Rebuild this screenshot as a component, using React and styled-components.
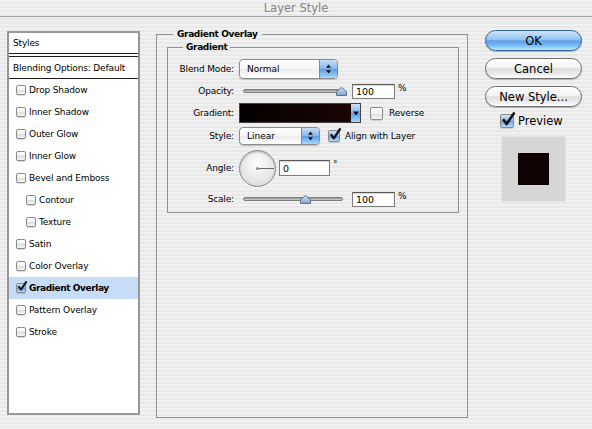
import React from 'react';
import styled, { createGlobalStyle } from 'styled-components';

const GlobalStyle = createGlobalStyle`
  html, body {
    margin: 0;
    padding: 0;
  }
  body {
    width: 592px;
    height: 429px;
    overflow: hidden;
    font-family: "DejaVu Sans", "Liberation Sans", sans-serif;
    font-size: 9px;
    color: #000;
    background: repeating-linear-gradient(to bottom, #f1f1f1 0px, #f1f1f1 2px, #e9e9e9 2px, #e9e9e9 4px);
  }
`;

const Window = styled.div`
  width: 592px;
  height: 429px;
  display: flex;
  flex-direction: column;
`;

const TitleBar = styled.div`
  height: 16px;
  border-bottom: 1px solid #a2a2a2;
  display: flex;
  align-items: center;
  justify-content: center;
  font-size: 11.5px;
  color: #858585;
`;

const Body = styled.div`
  display: flex;
  align-items: flex-start;
  padding: 11px 0 0 7px;
`;

/* left list */
const StylesList = styled.div`
  margin-top: 3px;
  width: 133px;
  height: 384px;
  box-sizing: border-box;
  border: 2px solid #979797;
  background: #fff;
  display: flex;
  flex-direction: column;
  letter-spacing: -0.15px;
`;

const ListHeader = styled.div`
  height: 20px;
  border-bottom: 4px double #1c1c1c;
  padding-left: 4px;
  display: flex;
  align-items: center;
`;

const ListBlending = styled.div`
  height: 21px;
  border-bottom: 1px solid #1c1c1c;
  padding-left: 4px;
  display: flex;
  align-items: center;
`;

const ListItem = styled.div`
  height: 22px;
  display: flex;
  align-items: center;
  gap: 3px;
  padding-left: ${p => (p.$indent ? 17 : 7)}px;
  background: ${p => (p.$active ? '#c7dcf6' : 'transparent')};
  font-weight: ${p => (p.$active ? 'bold' : 'normal')};
  letter-spacing: ${p => (p.$active ? '-0.4px' : '-0.15px')};
`;

/* checkbox */
const Box = styled.span`
  position: relative;
  flex: none;
  width: ${p => p.$size}px;
  height: ${p => p.$size}px;
  box-sizing: border-box;
  border: 1px solid #8a8a8a;
  border-radius: 2px;
  background: ${p =>
    p.$checked
      ? 'linear-gradient(#d3e5f8, #8fbbe9 50%, #6ea4e2 55%, #b5dcfb)'
      : 'linear-gradient(#ffffff, #f1f1f1 50%, #dedede 55%, #f7f7f7)'};
  box-shadow: 0 1px 1px rgba(0, 0, 0, 0.15);
`;

const Tick = styled.svg`
  position: absolute;
  left: 0;
  top: -3px;
  overflow: visible;
`;

const Checkbox = ({ size = 10, checked }) => (
  <Box $size={size} $checked={checked}>
    {checked && (
      <Tick width={size} height={size} viewBox="0 0 10 10">
        <path d="M1.5 5.2 L4 8.6 L9.6 0.4" fill="none" stroke="#111" strokeWidth="1.9" strokeLinejoin="round" />
      </Tick>
    )}
  </Box>
);

/* middle groups */
const OuterGroup = styled.fieldset`
  margin: 0 0 0 16px;
  min-inline-size: 0;
  width: 312px;
  height: 390px;
  box-sizing: border-box;
  border: 1px solid #909090;
  padding: 1px 8px 0 10px;
`;

const InnerGroup = styled.fieldset`
  margin: 0;
  min-inline-size: 0;
  border: 1px solid #909090;
  padding: 6px 0 5px 0;
`;

const Legend = styled.legend`
  font-weight: bold;
  line-height: 12px;
  letter-spacing: -0.35px;
  padding: 0 ${p => p.$pad}px;
  margin-left: ${p => p.$offset}px;
`;

const Rows = styled.div`
  display: flex;
  flex-direction: column;
  gap: 4px;
`;

const Row = styled.div`
  height: ${p => p.$h}px;
  display: grid;
  grid-template-columns: 66px 1fr;
  column-gap: 5px;
  align-items: center;
`;

const Label = styled.span`
  text-align: right;
  letter-spacing: -0.15px;
`;

const Controls = styled.div`
  display: flex;
  align-items: center;
  height: 100%;
`;

const Select = styled.div`
  width: ${p => p.$w}px;
  height: ${p => p.$h}px;
  box-sizing: border-box;
  border: 1px solid #8b8b8b;
  border-radius: 4px;
  background: linear-gradient(#ffffff, #f6f6f6 50%, #ececec 52%, #ffffff);
  box-shadow: 0 1px 1px rgba(0, 0, 0, 0.2);
  display: flex;
  align-items: center;
  padding-left: 7px;
  overflow: hidden;
`;

const SelectArrows = styled.span`
  margin-left: auto;
  width: 17px;
  align-self: stretch;
  border-left: 1px solid #6c8fbd;
  background: linear-gradient(#c7def7, #86b7ec 48%, #5e9be3 52%, #a8d8fd);
  display: flex;
  align-items: center;
  justify-content: center;
`;

const Arrows = () => (
  <svg width="7" height="10" viewBox="0 0 7 10">
    <path d="M3.5 0.5 L6 3.8 L1 3.8 Z M3.5 9.5 L6 6.2 L1 6.2 Z" fill="#111" />
  </svg>
);

const SliderWrap = styled.div`
  position: relative;
  width: 105px;
  height: 12px;
  margin-left: 4px;
  display: flex;
  align-items: center;
`;

const Track = styled.div`
  width: 100px;
  height: 4px;
  box-sizing: border-box;
  border: 1px solid #7c7c7c;
  border-radius: 2px;
  background: linear-gradient(#8d8d8d, #d9d9d9);
`;

const Thumb = styled.svg`
  position: absolute;
  top: 2px;
`;

const Slider = ({ value }) => (
  <SliderWrap>
    <Track />
    <Thumb width="11" height="9" viewBox="0 0 11 9" style={{ left: value - 5 }}>
      <defs>
        <linearGradient id={`th${value}`} x1="0" y1="0" x2="0" y2="1">
          <stop offset="0" stopColor="#d8e6f6" />
          <stop offset="1" stopColor="#7f9fc6" />
        </linearGradient>
      </defs>
      <path d="M0.5 8.5 L0.5 4.5 L5.5 0.5 L10.5 4.5 L10.5 8.5 Z" fill={`url(#th${value})`} stroke="#5a7397" />
    </Thumb>
  </SliderWrap>
);

const NumField = styled.input`
  width: ${p => p.$w}px;
  height: ${p => p.$h}px;
  margin: 0 0 0 ${p => p.$ml}px;
  box-sizing: border-box;
  border: 1px solid #7c7c7c;
  border-top-color: #5a5a5a;
  background: #fff;
  box-shadow: inset 0 1px 1px rgba(0, 0, 0, 0.18);
  padding: 0 0 0 3px;
  font-family: "DejaVu Sans", sans-serif;
  font-size: 9.5px;
  color: #000;
  outline: none;
`;

const Unit = styled.span`
  align-self: flex-start;
  margin-left: 3px;
  margin-top: ${p => p.$mt}px;
`;

const GradientSwatch = styled.div`
  width: 122px;
  height: 20px;
  box-sizing: border-box;
  border: 1px solid #444;
  display: flex;
`;

const GradientFill = styled.div`
  flex: 1;
  background: linear-gradient(to right, #050000, #1b0505);
`;

const GradientArrow = styled.div`
  width: 9px;
  background: linear-gradient(#cfe2f7, #7eb1ea 50%, #5f9be2 52%, #a5d6fb);
  display: flex;
  align-items: center;
  justify-content: center;
`;

const CheckLabel = styled.span`
  margin-left: ${p => p.$ml}px;
  display: inline-flex;
  align-items: center;
  gap: ${p => p.$gap}px;
  letter-spacing: -0.15px;
`;

const Dial = styled.div`
  width: 37px;
  height: 37px;
  box-sizing: border-box;
  border-radius: 50%;
  border: 1px solid #8a8a8a;
  background: radial-gradient(circle at 50% 35%, #fdfdfd, #e4e4e4 65%, #cdcdcd);
  box-shadow: inset 0 1px 2px rgba(0, 0, 0, 0.25), 0 1px 0 #fff;
  flex: none;
`;

/* right column */
const Buttons = styled.div`
  margin: 2px 0 0 17px;
  width: 97px;
  display: flex;
  flex-direction: column;
  gap: 7px;
`;

const AquaButton = styled.button`
  height: 21px;
  width: 97px;
  margin: 0;
  padding: 0;
  border-radius: 11px;
  border: 1px solid ${p => (p.$primary ? '#34609a' : '#707070')};
  background: ${p =>
    p.$primary
      ? 'linear-gradient(#cde4fb, #93c2f1 45%, #5d9fe7 52%, #7ec0f6 80%, #bdeeff)'
      : 'linear-gradient(#ffffff, #f3f3f3 45%, #dedede 52%, #ececec 80%, #ffffff)'};
  box-shadow: 0 1px 1px rgba(0, 0, 0, 0.25);
  font-family: "DejaVu Sans", sans-serif;
  font-size: 11.5px;
  color: #000;
`;

const PreviewToggle = styled.div`
  display: flex;
  align-items: center;
  gap: 4px;
  padding-left: 15px;
  font-size: 11.5px;
`;

const PreviewBox = styled.div`
  margin: 1px 0 0 16px;
  width: 65px;
  height: 66px;
  box-sizing: border-box;
  border: 1px solid #e4e4e4;
  background: #d6d6d6;
  display: flex;
  align-items: center;
  justify-content: center;
`;

const PreviewSwatch = styled.div`
  width: 31px;
  height: 32px;
  background: #0e0202;
`;

const styleItems = [
  { name: 'Drop Shadow' },
  { name: 'Inner Shadow' },
  { name: 'Outer Glow' },
  { name: 'Inner Glow' },
  { name: 'Bevel and Emboss' },
  { name: 'Contour', indent: true },
  { name: 'Texture', indent: true },
  { name: 'Satin' },
  { name: 'Color Overlay' },
  { name: 'Gradient Overlay', active: true },
  { name: 'Pattern Overlay' },
  { name: 'Stroke' },
];

export default function App() {
  return (
    <Window>
      <GlobalStyle />
      <TitleBar>Layer Style</TitleBar>
      <Body>
        <StylesList>
          <ListHeader>Styles</ListHeader>
          <ListBlending>Blending Options: Default</ListBlending>
          {styleItems.map(it => (
            <ListItem key={it.name} $indent={it.indent} $active={it.active}>
              <Checkbox checked={it.active} />
              {it.name}
            </ListItem>
          ))}
        </StylesList>

        <OuterGroup>
          <Legend $pad={4} $offset={6}>Gradient Overlay</Legend>
          <InnerGroup>
            <Legend $pad={3} $offset={15}>Gradient</Legend>
            <Rows>
              <Row $h={20}>
                <Label>Blend Mode:</Label>
                <Controls>
                  <Select $w={99} $h={20}>
                    Normal
                    <SelectArrows><Arrows /></SelectArrows>
                  </Select>
                </Controls>
              </Row>
              <Row $h={16}>
                <Label>Opacity:</Label>
                <Controls>
                  <Slider value={98} />
                  <NumField $w={43} $h={15} $ml={4} readOnly value="100" />
                  <Unit $mt={0}>%</Unit>
                </Controls>
              </Row>
              <Row $h={20}>
                <Label>Gradient:</Label>
                <Controls>
                  <GradientSwatch>
                    <GradientFill />
                    <GradientArrow>
                      <svg width="6" height="5" viewBox="0 0 6 5">
                        <path d="M0 0.5 L6 0.5 L3 4.5 Z" fill="#111" />
                      </svg>
                    </GradientArrow>
                  </GradientSwatch>
                  <CheckLabel $ml={9} $gap={6}>
                    <Checkbox size={13} />
                    Reverse
                  </CheckLabel>
                </Controls>
              </Row>
              <Row $h={18}>
                <Label>Style:</Label>
                <Controls>
                  <Select $w={81} $h={18}>
                    Linear
                    <SelectArrows><Arrows /></SelectArrows>
                  </Select>
                  <CheckLabel $ml={8} $gap={5}>
                    <Checkbox size={12} checked />
                    Align with Layer
                  </CheckLabel>
                </Controls>
              </Row>
              <Row $h={38}>
                <Label>Angle:</Label>
                <Controls>
                  <Dial>
                    <svg width="35" height="35" viewBox="0 0 35 35">
                      <line x1="17.5" y1="17.5" x2="34" y2="17.5" stroke="#6a6a6a" strokeWidth="1" />
                      <circle cx="17.5" cy="17.5" r="1.5" fill="#8a8a8a" />
                    </svg>
                  </Dial>
                  <NumField $w={51} $h={16} $ml={3} readOnly value="0" />
                  <Unit $mt={10}>°</Unit>
                </Controls>
              </Row>
              <Row $h={16}>
                <Label>Scale:</Label>
                <Controls>
                  <Slider value={62} />
                  <NumField $w={43} $h={15} $ml={4} readOnly value="100" />
                  <Unit $mt={0}>%</Unit>
                </Controls>
              </Row>
            </Rows>
          </InnerGroup>
        </OuterGroup>

        <Buttons>
          <AquaButton $primary>OK</AquaButton>
          <AquaButton>Cancel</AquaButton>
          <AquaButton>New Style...</AquaButton>
          <PreviewToggle>
            <Checkbox size={14} checked />
            Preview
          </PreviewToggle>
          <PreviewBox>
            <PreviewSwatch />
          </PreviewBox>
        </Buttons>
      </Body>
    </Window>
  );
}
